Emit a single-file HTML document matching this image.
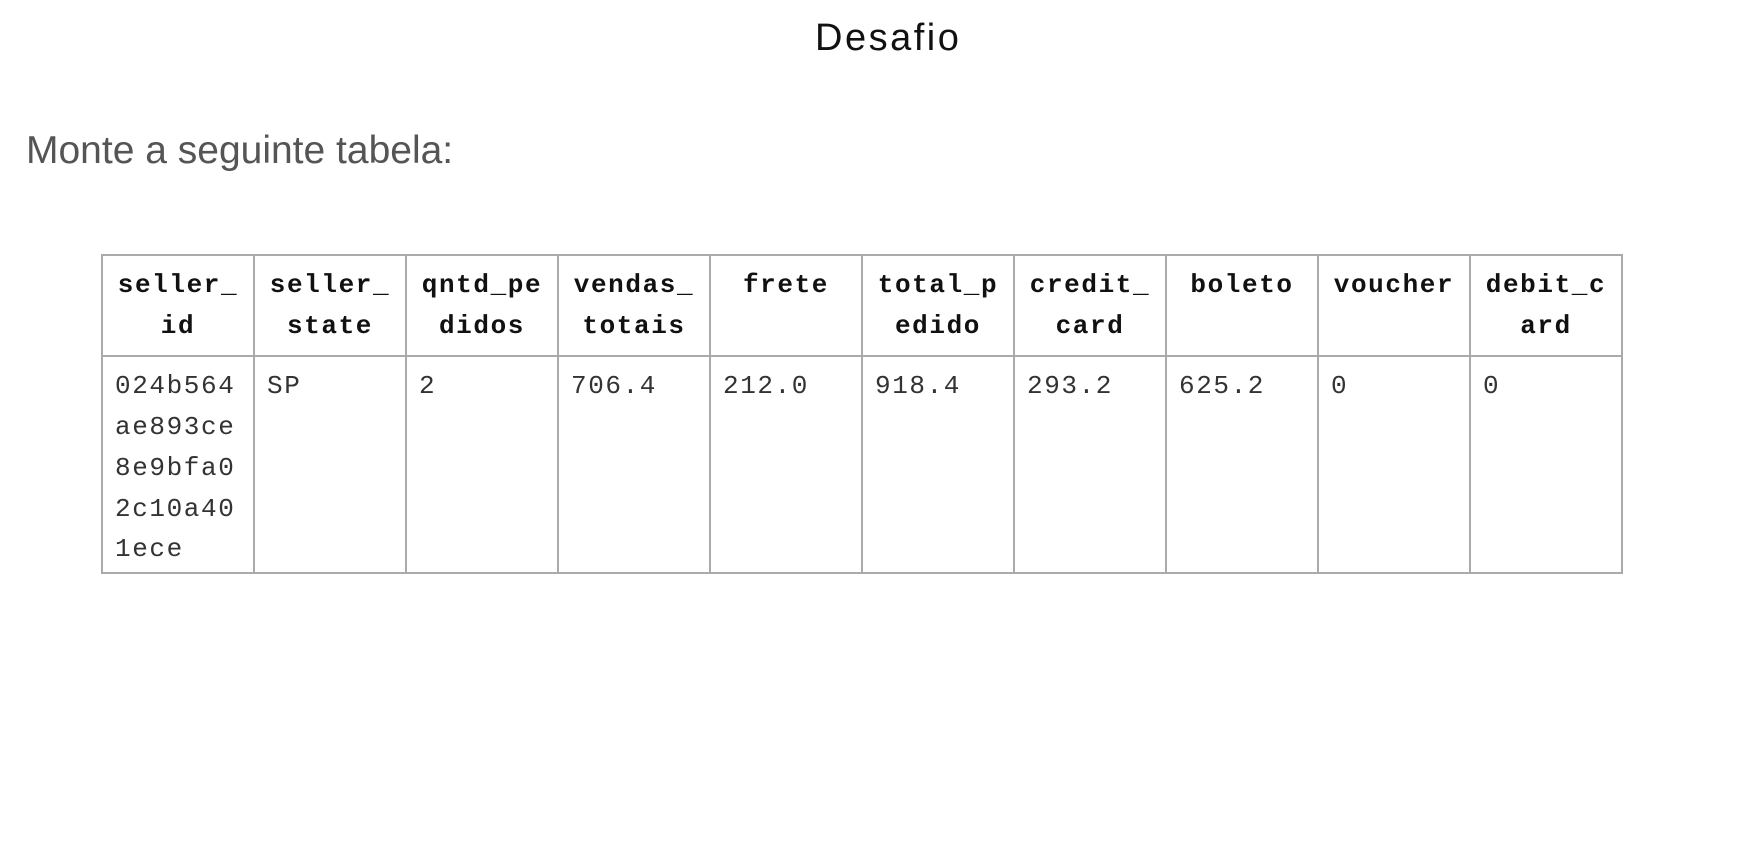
<!DOCTYPE html>
<html><head><meta charset="utf-8"><style>
body{margin:0;background:#fff;width:1752px;height:857px;overflow:hidden;font-family:"Liberation Sans",sans-serif;}
h1{position:absolute;left:815px;top:13px;margin:0;font-weight:normal;font-size:38px;letter-spacing:2.5px;color:#111;line-height:50px;white-space:nowrap}
p{position:absolute;left:26px;top:126px;margin:0;font-size:39px;color:#555;line-height:50px;white-space:nowrap}
table{position:absolute;left:101px;top:254px;border-collapse:collapse;table-layout:fixed;width:1521px;font-family:"Liberation Mono",monospace;font-size:26px;letter-spacing:1.6px;}
td,th{box-sizing:border-box;border:2px solid #aaa;width:152px;padding:9px 12px;line-height:40.7px;vertical-align:top;overflow:hidden;word-break:break-all}
th{text-align:center;font-weight:bold;color:#111;height:100px}
td{text-align:left;color:#333;height:217px;padding-bottom:0}
</style></head><body>
<h1>Desafio</h1>
<p>Monte a seguinte tabela:</p>
<table><tr><th>seller_ id</th><th>seller_ state</th><th>qntd_pe didos</th><th>vendas_ totais</th><th>frete</th><th>total_p edido</th><th>credit_ card</th><th>boleto</th><th>voucher</th><th>debit_c ard</th></tr>
<tr><td>024b564 ae893ce 8e9bfa0 2c10a40 1ece</td><td>SP</td><td>2</td><td>706.4</td><td>212.0</td><td>918.4</td><td>293.2</td><td>625.2</td><td>0</td><td>0</td></tr></table>
</body></html>
